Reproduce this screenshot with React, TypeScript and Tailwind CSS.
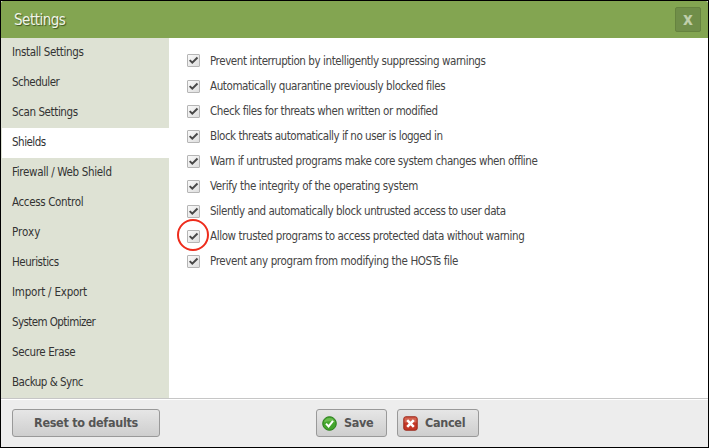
const navItems = [
  { label: "Install Settings", tracking: "tracking-[-0.33px]" },
  { label: "Scheduler", tracking: "tracking-[-0.5px]" },
  { label: "Scan Settings", tracking: "tracking-[-0.4px]" },
  { label: "Shields", tracking: "tracking-[-0.5px]" },
  { label: "Firewall / Web Shield", tracking: "tracking-[-0.33px]" },
  { label: "Access Control", tracking: "tracking-[-0.35px]" },
  { label: "Proxy", tracking: "tracking-[0px]" },
  { label: "Heuristics", tracking: "tracking-[-0.45px]" },
  { label: "Import / Export", tracking: "tracking-[-0.22px]" },
  { label: "System Optimizer", tracking: "tracking-[-0.58px]" },
  { label: "Secure Erase", tracking: "tracking-[-0.38px]" },
  { label: "Backup & Sync", tracking: "tracking-[-0.5px]" },
];

const options = [
  { label: "Prevent interruption by intelligently suppressing warnings", tracking: "tracking-[-0.42px]" },
  { label: "Automatically quarantine previously blocked files", tracking: "tracking-[-0.41px]" },
  { label: "Check files for threats when written or modified", tracking: "tracking-[-0.41px]" },
  { label: "Block threats automatically if no user is logged in", tracking: "tracking-[-0.47px]" },
  { label: "Warn if untrusted programs make core system changes when offline", tracking: "tracking-[-0.42px]" },
  { label: "Verify the integrity of the operating system", tracking: "tracking-[-0.36px]" },
  { label: "Silently and automatically block untrusted access to user data", tracking: "tracking-[-0.45px]" },
  { label: "Allow trusted programs to access protected data without warning", tracking: "tracking-[-0.4px]" },
  { label: "Prevent any program from modifying the HOSTs file", tracking: "tracking-[-0.37px]" },
];

const buttonClass =
  "flex h-7 items-center rounded-[3px] border border-[#999] bg-linear-to-b from-[#e6e6e6] to-[#cecece] text-[12.5px] tracking-[-0.3px] font-bold text-[#555] whitespace-nowrap";

function Checkbox() {
  return (
    <span className="flex size-[13px] shrink-0 items-center justify-center rounded-[1px] border border-[#b5b5b5] bg-linear-to-br from-[#fafafa] to-[#dedede]">
      <svg width="11" height="11" viewBox="0 0 11 11" fill="none" className="shrink-0">
        <path d="M1.7 5.1 4.3 7.7 9.5 2.5" stroke="#484848" strokeWidth="2" />
      </svg>
    </span>
  );
}

export default function App() {
  return (
    <div className="h-[448px] w-[709px] overflow-hidden border border-black bg-white font-['DejaVu_Sans_Condensed','DejaVu_Sans',sans-serif] text-[11.5px] text-[#333]">
      <div className="flex h-full flex-col">
        <header className="flex h-[37px] shrink-0 items-center justify-between rounded-t-[2px] bg-[#83a551] pr-[7px] pl-[13px]">
          <h1 className="text-[15px] leading-5 tracking-[-0.5px] text-[#f1f5e9] [text-shadow:1px_1px_1px_#3d5420]">Settings</h1>
          <button className="flex h-[25px] w-[26px] items-center justify-center rounded-[2px] border border-[#66833f] bg-[#708e49] pb-px text-[17px] leading-none font-bold text-[#c0cfaa]">
            x
          </button>
        </header>
        <div className="flex h-[360px] shrink-0">
          <nav className="w-[168px] shrink-0 bg-[#dee2d4]">
            {navItems.map(({ label, tracking }) => (
              <div key={label} className={`flex h-[30px] items-center pb-[3px] ${label === "Shields" ? "ml-px bg-white pl-[10px]" : "pl-[11px]"}`}>
                <span className={`leading-4 whitespace-nowrap ${tracking}`}>{label}</span>
              </div>
            ))}
          </nav>
          <main className="flex flex-col pt-[10px] pl-[18px]">
            {options.map(({ label, tracking }, i) => (
              <label key={label} className="relative flex h-[25px] items-center gap-[10px] text-[#444]">
                <span className={i === 0 ? "flex pb-0" : "flex pt-px"}>
                  <Checkbox />
                </span>
                <span className={`pt-px leading-4 whitespace-nowrap ${tracking}`}>{label}</span>
                {i === 7 && (
                  <span className="absolute top-[-4px] left-[-10px] size-[32px] rounded-full border-2 border-[#ee2c1c]" />
                )}
              </label>
            ))}
          </main>
        </div>
        <footer className="flex grow items-start border-t border-[#c6c6c6] bg-[#ededed] pl-[11px] shadow-[inset_0_1px_0_#fff]">
          <button className={`${buttonClass} mt-[10px] w-[148px] justify-center`}>Reset to defaults</button>
          <button className={`${buttonClass} mt-[10px] ml-[156px] w-[71px] gap-[7px] pl-[5px]`}>
            <svg width="15" height="15" viewBox="0 0 15 15" fill="none">
              <circle cx="7.5" cy="7.5" r="6.8" fill="#44a52d" stroke="#287d19" />
              <path d="M2 6.5a5.6 5.6 0 0 1 11 0Q7.5 4 2 6.5" fill="#6bbd50" />
              <path d="m4 7.6 2.6 2.8L11 4.8" stroke="#fff" strokeWidth="2" />
            </svg>
            Save
          </button>
          <button className={`${buttonClass} mt-[10px] ml-[10px] w-[82px] gap-[7px] pl-[5px]`}>
            <svg width="15" height="15" viewBox="0 0 15 15" fill="none">
              <rect x=".8" y=".8" width="13.4" height="13.4" rx="2" fill="#c43827" stroke="#982719" />
              <path d="M1.5 1.5h12v5h-12z" fill="#d26350" />
              <path d="m4.2 4.2 6.6 6.6m0-6.6-6.6 6.6" stroke="#fff" strokeWidth="2.6" />
            </svg>
            Cancel
          </button>
        </footer>
      </div>
    </div>
  );
}
